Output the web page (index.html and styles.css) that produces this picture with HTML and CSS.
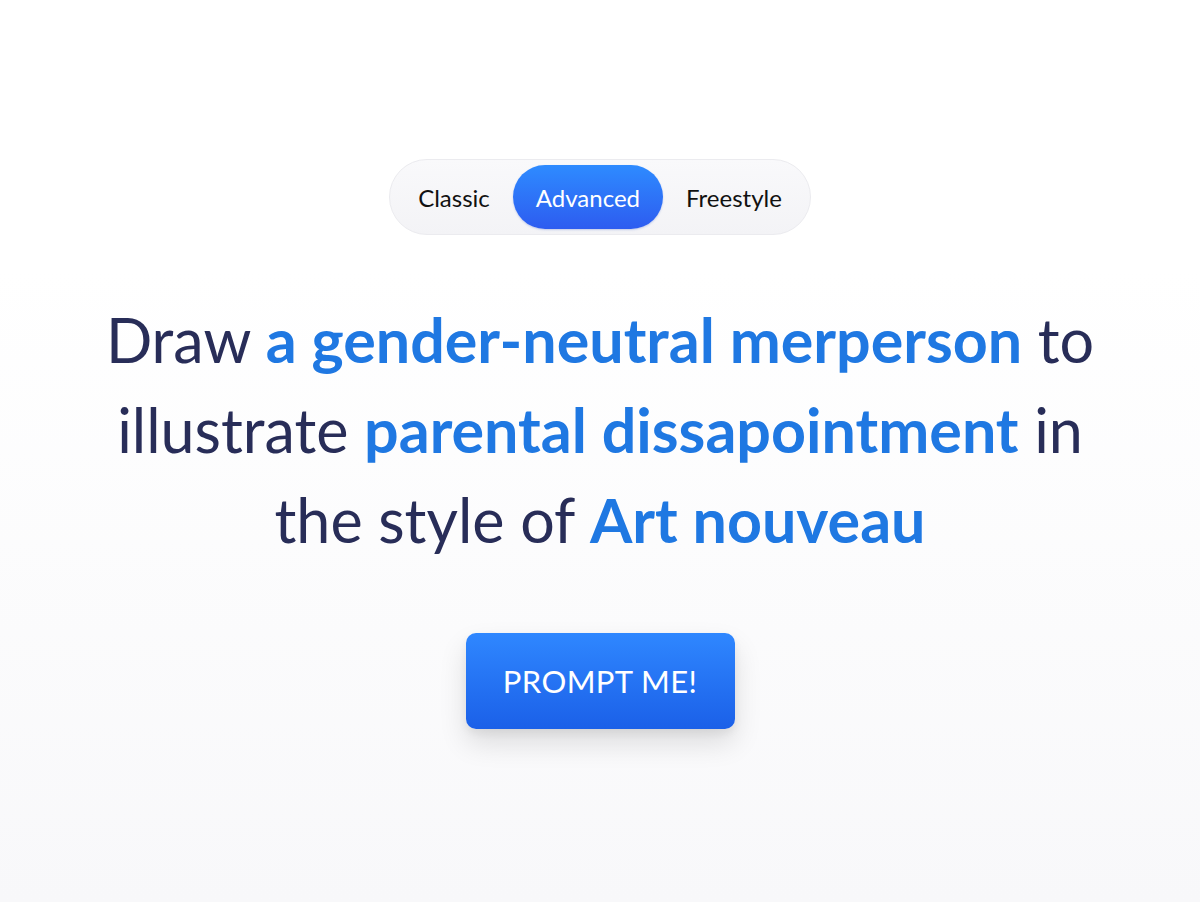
FILE: index.html
```html
<!DOCTYPE html>
<html lang="en">
<head>
<meta charset="utf-8">
<title>Prompt generator</title>
<link rel="stylesheet" href="styles.css">
</head>
<body>
<main class="page">
  <nav class="modes">
    <button class="mode">Classic</button>
    <button class="mode mode-active">Advanced</button>
    <button class="mode">Freestyle</button>
  </nav>
  <h1 class="prompt">Draw <span class="hl">a gender-neutral merperson</span> to illustrate <span class="hl">parental dissapointment</span> in the style of <span class="hl">Art nouveau</span></h1>
  <button class="cta">PROMPT ME!</button>
</main>
</body>
</html>
```
FILE: styles.css
```css
html, body {
  margin: 0;
  padding: 0;
  height: 100%;
}
body {
  font-family: Lato, "Noto Sans", sans-serif;
  background: linear-gradient(180deg, #ffffff 0%, #ffffff 30%, #f8f8fa 100%);
}
.page {
  display: flex;
  flex-direction: column;
  align-items: center;
  padding-top: 159px;
  box-sizing: border-box;
  height: 902px;
}
.modes {
  display: flex;
  padding: 5px;
  border: 1px solid #ebebef;
  border-radius: 40px;
  background: linear-gradient(180deg, #f9f9fb 0%, #f3f3f6 100%);
}
.mode {
  font-family: inherit;
  font-size: 24px;
  color: #111;
  background: none;
  border: none;
  height: 64px;
  padding: 0 23px;
  border-radius: 32px;
  cursor: pointer;
}
.mode-active {
  color: #fff;
  background: linear-gradient(180deg, #2e8bff 0%, #2d5cf0 100%);
  box-shadow: 0 1px 2px rgba(40, 80, 200, 0.25);
}
.prompt {
  margin: 60px 0 0;
  width: 1000px;
  text-align: center;
  font-size: 61px;
  line-height: 90px;
  font-weight: 400;
  color: #282d58;
}
.hl {
  font-weight: 700;
  color: #1f78e2;
}
.cta {
  margin-top: 68px;
  width: 269px;
  height: 96px;
  font-family: inherit;
  font-size: 31px;
  color: #fff;
  letter-spacing: 0.4px;
  border: none;
  border-radius: 10px;
  background: linear-gradient(180deg, #2f87ff 0%, #1b60e8 100%);
  box-shadow: 0 14px 28px rgba(0, 0, 0, 0.12), 0 4px 8px rgba(0, 0, 0, 0.06);
  cursor: pointer;
}
```
